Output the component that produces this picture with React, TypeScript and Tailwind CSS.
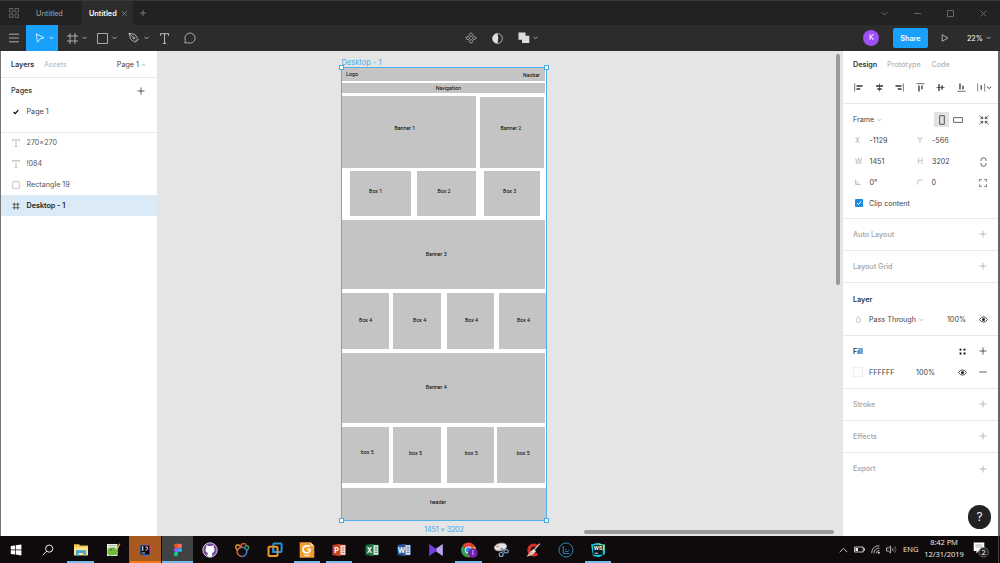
import type { ReactNode } from "react";

/* ---------- shared pieces ---------- */

type SvgProps = { w: number; h: number; className?: string; sw?: number; children: ReactNode };

const Svg = ({ w, h, className = "", sw = 0.8, children }: SvgProps) => (
  <svg
    width={w}
    height={h}
    viewBox={`0 0 ${w} ${h}`}
    fill="none"
    stroke="currentColor"
    strokeWidth={sw}
    className={`shrink-0 ${className}`}
  >
    {children}
  </svg>
);

const Chevron = ({ className = "" }: { className?: string }) => (
  <Svg w={5} h={4} className={className}>
    <path d="M.5 .8 2.5 2.8 4.5 .8" />
  </Svg>
);

const Plus = ({ className = "" }: { className?: string }) => (
  <Svg w={8} h={8} className={className}>
    <path d="M4 .5V7.5M.5 4H7.5" />
  </Svg>
);

/* ---------- title bar and toolbar ---------- */

const TitleBar = () => (
  <div className="flex h-[25px] items-center border-t border-[#383838] bg-[#222222] text-[7.3px] text-[#a5a5a5]">
    <Svg w={10} h={10} className="ml-[9px] text-[#777]">
      <path d="M.5 .5h3.4v3.4H.5zM6 .5h3.4v3.4H6zM.5 6h3.4v3.4H.5zM6 6h3.4v3.4H6z" />
    </Svg>
    <div className="ml-[17px] w-[46px] pt-px">Untitled</div>
    <div className="flex h-full w-[51px] items-center justify-between bg-[#2c2c2c] pt-px pr-[6px] pl-[7px] font-semibold text-white">
      Untitled
      <Svg w={5} h={5} className="text-[#999]" sw={0.7}>
        <path d="M.3 .3 4.7 4.7M4.7 .3 .3 4.7" />
      </Svg>
    </div>
    <Svg w={6} h={6} className="ml-[7px] text-[#888]">
      <path d="M3 0V6M0 3H6" />
    </Svg>
    <div className="ml-auto flex items-center pr-[13px] text-[#777]">
      <Svg w={7} h={5} className="mr-[26px]">
        <path d="M.5 1 3.5 4 6.5 1" />
      </Svg>
      <Svg w={7} h={7} className="mr-[26px]">
        <path d="M0 3.5H7" />
      </Svg>
      <Svg w={7} h={7} className="mr-[26px]">
        <path d="M.5 .5h6v6h-6z" />
      </Svg>
      <Svg w={7} h={7}>
        <path d="M.5 .5 6.5 6.5M6.5 .5 .5 6.5" />
      </Svg>
    </div>
  </div>
);

const Toolbar = () => (
  <div className="flex h-[26px] items-center bg-[#2c2c2c] text-[#c9c9c9]">
    <div className="flex w-[26px] pl-[8.5px]">
      <Svg w={10} h={10}>
        <path d="M0 1.2H10M0 5H10M0 8.8H10" />
      </Svg>
    </div>
    <div className="flex h-full w-[32px] items-center bg-[#18a0fb] pl-[9px] text-white">
      <Svg w={10} h={10}>
        <path d="M1.3 .8 9 4.8 5.2 5.8 2.5 9.2z" strokeLinejoin="round" />
      </Svg>
      <Chevron className="ml-[4px]" />
    </div>
    <div className="flex w-[35px] items-center pl-[9px]">
      <Svg w={11} h={11}>
        <path d="M3 0V11M8 0V11M0 3H11M0 8H11" />
      </Svg>
      <Chevron className="ml-[4px]" />
    </div>
    <div className="flex w-[34px] items-center pl-[4px]">
      <Svg w={11} h={11}>
        <path d="M.5 .5h10v10H.5z" />
      </Svg>
      <Chevron className="ml-[4px]" />
    </div>
    <div className="flex w-[32px] items-center pl-[1px]">
      <Svg w={12} h={12}>
        <path d="M1 1.2 7 2.5 9.8 6.6 6.6 10 2.5 7zM1 1.2 5.2 5.4M10.4 7.3 7.3 10.5" strokeLinejoin="round" />
        <circle cx="5.9" cy="6" r="1" />
      </Svg>
      <Chevron className="ml-[4px]" />
    </div>
    <div className="flex w-[26px] pl-[1px]">
      <Svg w={9} h={11} sw={0.9}>
        <path d="M.5 2.8V.7h8v2.1M4.5 .7v9.6M2.8 10.4h3.4" />
      </Svg>
    </div>
    <Svg w={12} h={12} className="-ml-px">
      <path d="M.7 10.8 1.4 8.3A5.1 5.1 0 1 1 4 10.8z" strokeLinejoin="round" />
    </Svg>
    <div className="ml-[269px] flex items-center">
      <Svg w={12} h={12}>
        <path d="M6 .7 8 2.7 6 4.7 4 2.7zM6 7.3 8 9.3 6 11.3 4 9.3zM2.7 4 4.7 6 2.7 8 .7 6zM9.3 4 11.3 6 9.3 8 7.3 6z" />
      </Svg>
      <Svg w={11} h={11} className="ml-[15px]">
        <circle cx="5.5" cy="5.5" r="4.9" />
        <path d="M5.5 .6A4.9 4.9 0 0 0 5.5 10.4Q7.2 5.5 5.5 .6z" fill="#ddd" stroke="none" />
      </Svg>
      <Svg w={12} h={12} className="ml-[15px]">
        <path d="M.5 .5h7v3.2h3.8v7.3H4V7.7H.5z" fill="#dedede" stroke="none" />
      </Svg>
      <Chevron className="ml-[3px]" />
    </div>
    <div className="ml-auto flex items-center pr-[9px]">
      <div className="flex size-[16px] items-center justify-center rounded-full bg-[#9b51f5] text-[7.5px] text-white">K</div>
      <div className="ml-[13.5px] flex h-[20px] w-[35px] items-center justify-center rounded-[2px] bg-[#18a0fb] pt-px text-[7.2px] font-semibold text-white">
        Share
      </div>
      <Svg w={8} h={8} className="ml-[13.5px]">
        <path d="M1.2 .8 7 4 1.2 7.2z" />
      </Svg>
      <div className="ml-[17.5px] pt-px text-[7.3px] text-white">22%</div>
      <Chevron className="ml-[3px]" />
    </div>
  </div>
);

/* ---------- left panel ---------- */

const TextGlyph = () => (
  <Svg w={8} h={8} className="text-[#aaa]" sw={0.7}>
    <path d="M.5 2.2V.7h7v1.5M4 .7v6.6M2.8 7.4h2.4" />
  </Svg>
);

const LayerRow = ({ icon, label }: { icon: ReactNode; label: string }) => (
  <div className="flex h-[21px] items-center pl-[11px]">
    {icon}
    <span className="ml-[6.5px]">{label}</span>
  </div>
);

const LeftPanel = () => (
  <aside className="w-[157px] shrink-0 border-l border-[#777] bg-white text-[7.2px] text-[#444]">
    <div className="flex h-[27px] items-center border-b border-[#e8e8e8] pt-px pl-[10px]">
      <span className="w-[33px] font-semibold text-[#333]">Layers</span>
      <span className="text-[#b3b3b3]">Assets</span>
      <span className="ml-auto">Page 1</span>
      <Chevron className="mr-[11px] ml-[2px] rotate-180 text-[#aaa]" />
    </div>
    <div className="h-[55px] border-b border-[#e8e8e8] pt-[2px]">
      <div className="flex h-[21px] items-center justify-between pr-[12px] pl-[10px]">
        <span className="pt-px font-medium text-[#333]">Pages</span>
        <Plus className="text-[#333]" />
      </div>
      <div className="flex h-[21px] items-center pl-[12px]">
        <Svg w={6} h={6} sw={1.2} className="text-black">
          <path d="M.7 3 2.2 4.6 5.3 1.2" />
        </Svg>
        <span className="ml-[7.5px]">Page 1</span>
      </div>
    </div>
    <div className="-mt-[0.6px] text-[#555]">
      <LayerRow icon={<TextGlyph />} label="270×270" />
      <LayerRow icon={<TextGlyph />} label="!084" />
      <LayerRow
        icon={
          <Svg w={8} h={8} className="text-[#aaa]" sw={0.7}>
            <path d="M.7 .7h6.6v6.6H.7z" />
          </Svg>
        }
        label="Rectangle 19"
      />
    </div>
    <div className="bg-[#daebf7] font-semibold text-[#222]">
      <LayerRow
        icon={
          <Svg w={8} h={8} className="text-[#444]" sw={0.8}>
            <path d="M2.3 .5V7.5M5.7 .5V7.5M.5 2.3H7.5M.5 5.7H7.5" />
          </Svg>
        }
        label="Desktop - 1"
      />
    </div>
  </aside>
);

/* ---------- canvas ---------- */

type Rect = [x: number, y: number, w: number, h: number];
type Label = [text: string, cx: number, cy: number];

const FRAME: Rect = [341, 67, 206, 454];

const BLOCKS: Rect[] = [
  [342, 68, 203, 13],
  [342, 83, 203, 10],
  [342, 96, 134.3, 72],
  [480, 96.6, 64, 71.4],
  [350, 170.7, 60.8, 45.5],
  [417, 170.7, 59.3, 45.5],
  [484, 170.7, 55.5, 45.5],
  [342, 220, 203, 68.7],
  [342, 293.3, 47, 55.6],
  [393.4, 293.3, 47.5, 55.6],
  [447, 293.3, 47.3, 55.6],
  [499, 293.3, 48, 55.6],
  [342, 353.2, 203, 69.4],
  [342, 427.2, 47, 55.6],
  [393.4, 427.2, 47.5, 55.6],
  [447, 427.2, 47.3, 55.6],
  [497.4, 427.2, 47.6, 55.6],
  [342, 488.2, 204.5, 32],
];

const LABELS: Label[] = [
  ["Logo", 352, 74],
  ["Navbar", 531.5, 75.3],
  ["Navigation", 448.3, 88.3],
  ["Banner 1", 404.9, 128],
  ["Banner 2", 510.9, 128],
  ["Box 1", 375.7, 190.4],
  ["Box 2", 444, 190.4],
  ["Box 3", 509.7, 190.4],
  ["Banner 3", 436.2, 254.3],
  ["Box 4", 365.7, 320.3],
  ["Box 4", 419.7, 320.3],
  ["Box 4", 471.5, 319.5],
  ["Box 4", 523.5, 320.3],
  ["Banner 4", 436.2, 386.4],
  ["box 5", 367.3, 451.8],
  ["box 5", 415.5, 452.6],
  ["box 5", 471.3, 453.3],
  ["box 5", 523.3, 452.6],
  ["header", 438, 502.3],
];

const HANDLES: [number, number][] = [
  [341, 67],
  [546, 67],
  [341, 520],
  [546, 520],
];

const ORIGIN_X = 157;
const ORIGIN_Y = 51;

const box = ([x, y, w, h]: Rect) => ({ left: x - ORIGIN_X, top: y - ORIGIN_Y, width: w, height: h });
const point = (x: number, y: number) => ({ left: x - ORIGIN_X, top: y - ORIGIN_Y });

const Canvas = () => (
  <main className="relative min-w-0 flex-1 overflow-hidden bg-[#e5e5e5]">
    <div className="absolute bg-white" style={box(FRAME)} />
    {BLOCKS.map((b, i) => (
      <div key={i} className="absolute bg-[#c4c4c4]" style={box(b)} />
    ))}
    {LABELS.map(([text, cx, cy], i) => (
      <div
        key={i}
        className="absolute -translate-x-1/2 -translate-y-1/2 pt-[1.2px] font-[Roboto,sans-serif] text-[5.3px] leading-none whitespace-nowrap text-black"
        style={point(cx, cy)}
      >
        {text}
      </div>
    ))}
    <div className="absolute border border-[#4fb0ec]" style={box(FRAME)} />
    <div className="absolute text-[7.5px] leading-none whitespace-nowrap text-[#45a9e8]" style={point(341.5, 59)}>
      Desktop - 1
    </div>
    {HANDLES.map(([x, y]) => (
      <div
        key={`${x}-${y}`}
        className="absolute -mt-[2px] -ml-[2px] size-[5px] border border-[#45a9e8] bg-white"
        style={point(x, y)}
      />
    ))}
    <div
      className="absolute -translate-x-1/2 -translate-y-1/2 pt-px text-[7.3px] leading-none tracking-[-0.25px] whitespace-nowrap text-[#45a9e8]"
      style={point(444, 529.2)}
    >
      1451 × 3202
    </div>
    <div className="absolute rounded-full bg-[#999]" style={box([836, 54, 4, 231])} />
    <div className="absolute rounded-full bg-[#999]" style={box([584, 529.5, 250, 4])} />
  </main>
);

/* ---------- right panel ---------- */

const ALIGN_ICONS: { d: string; thin: string }[] = [
  { thin: "M.7 .5V8.5", d: "M2.5 3H8.5M2.5 6H6.2" },
  { thin: "M4.5 .5V8.5", d: "M1 3H8M2.3 6H6.7" },
  { thin: "M8.3 .5V8.5", d: "M.5 3H6.5M2.8 6H6.5" },
  { thin: "M.5 .7H8.5", d: "M3 2.5V8.5M6 2.5V6.2" },
  { thin: "M.5 4.5H8.5", d: "M3 1V8M6 2.3V6.7" },
  { thin: "M.5 8.3H8.5", d: "M3 .5V6.5M6 2.8V6.5" },
];

const Field = ({ mark, value }: { mark: ReactNode; value: string }) => (
  <div className="flex w-[62.5px] items-center">
    <span className="flex w-[14.5px] text-[#b0b0b0]">{mark}</span>
    <span className="text-[#444]">{value}</span>
  </div>
);

const FieldRow = ({ a, b, end }: { a: ReactNode; b: ReactNode; end?: ReactNode }) => (
  <div className="flex h-[21px] items-center pr-[11px] pl-[12px]">
    {a}
    {b}
    <span className="ml-auto">{end}</span>
  </div>
);

const EmptySection = ({ label, last = false }: { label: string; last?: boolean }) => (
  <div
    className={
      last
        ? "flex h-[32px] items-center justify-between pr-[11px] pl-[10px] text-[#a3a3a3]"
        : "flex h-[31.9px] items-center justify-between border-b border-[#e9e9e9] pr-[11px] pl-[10px] text-[#a3a3a3]"
    }
  >
    <span className="pt-px font-medium">{label}</span>
    <Plus className="text-[#aaa]" />
  </div>
);

const Eye = ({ className = "" }: { className?: string }) => (
  <Svg w={9} h={7} className={`text-[#222] ${className}`}>
    <path d="M.4 3.5Q4.5 -1.8 8.6 3.5Q4.5 8.8 .4 3.5z" />
    <circle cx="4.5" cy="3.5" r="1.5" fill="currentColor" stroke="none" />
  </Svg>
);

const RightPanel = () => (
  <aside className="relative w-[157px] shrink-0 border-r-2 border-[#666] bg-white text-[7.2px] text-[#444]">
    <div className="flex h-[26px] items-center pt-px pl-[10px] font-medium text-[#b3b3b3]">
      <span className="w-[34px] font-semibold text-[#333]">Design</span>
      <span className="w-[44.5px]">Prototype</span>
      <span>Code</span>
    </div>
    <div className="flex h-[27px] items-center justify-between border-b border-[#e9e9e9] pr-[6px] pb-[5px] pl-[11px] text-[#333]">
      {ALIGN_ICONS.map(({ thin, d }) => (
        <Svg key={d} w={9} h={9}>
          <path d={thin} strokeWidth={0.7} />
          <path d={d} strokeWidth={1.3} />
        </Svg>
      ))}
      <Svg w={15} h={9}>
        <path d="M.7 .5V8.5M7.7 .5V8.5" strokeWidth={0.6} />
        <path d="M4.2 2.2V6.8" strokeWidth={1.2} />
        <path d="M10.2 3.7 12.2 5.6 14.2 3.7" strokeWidth={1} />
      </Svg>
    </div>

    <div className="h-[115px] border-b border-[#e9e9e9] pt-[5px]">
      <div className="flex h-[21px] items-center pr-[9.5px] pl-[10px]">
        <span>Frame</span>
        <Chevron className="ml-[3px] text-[#aaa]" />
        <div className="ml-auto flex h-[15px] w-[15px] items-center justify-center bg-[#e3e3e3] text-[#333]">
          <Svg w={6} h={10}>
            <path d="M.7 .7h4.6v8.6H.7z" />
          </Svg>
        </div>
        <Svg w={10} h={6} className="ml-[3.5px] text-[#444]">
          <path d="M.6 .6h8.8v4.8H.6z" />
        </Svg>
        <Svg w={10} h={10} className="ml-[16px] text-[#333]">
          <path d="M.7 .7 3.6 3.6M3.6 1.4V3.6H1.4M9.3 .7 6.4 3.6M6.4 1.4V3.6H8.6M.7 9.3 3.6 6.4M3.6 8.6V6.4H1.4M9.3 9.3 6.4 6.4M6.4 8.6V6.4H8.6" />
        </Svg>
      </div>
      <FieldRow a={<Field mark="X" value="-1129" />} b={<Field mark="Y" value="-566" />} />
      <FieldRow
        a={<Field mark="W" value="1451" />}
        b={<Field mark="H" value="3202" />}
        end={
          <Svg w={7} h={10} className="text-[#444]">
            <path d="M1 4V3Q1 .7 3.5 .7T6 3V4M1 6V7Q1 9.3 3.5 9.3T6 7V6" />
          </Svg>
        }
      />
      <FieldRow
        a={
          <Field
            mark={
              <Svg w={6} h={6}>
                <path d="M.6 .5V5.4H5.6M.6 2.6Q3 2.8 3.2 5.4" />
              </Svg>
            }
            value="0°"
          />
        }
        b={
          <Field
            mark={
              <Svg w={6} h={6}>
                <path d="M.6 5.6V3.4Q.6 .8 3.2 .8H5.6" />
              </Svg>
            }
            value="0"
          />
        }
        end={
          <Svg w={8} h={8} className="text-[#444]">
            <path d="M.6 2.6V.6H2.6M5.4 .6H7.4V2.6M7.4 5.4V7.4H5.4M2.6 7.4H.6V5.4" />
          </Svg>
        }
      />
      <div className="flex h-[20.5px] items-center pl-[11.5px]">
        <span className="flex size-[8px] items-center justify-center rounded-[1px] bg-[#188de0] text-white">
          <Svg w={6} h={6} sw={1}>
            <path d="M1 3 2.5 4.5 5.2 1.5" />
          </Svg>
        </span>
        <span className="ml-[6.5px]">Clip content</span>
      </div>
    </div>

    <EmptySection label="Auto Layout" />
    <EmptySection label="Layout Grid" />

    <div className="h-[53px] border-b border-[#e9e9e9] pt-[5.5px]">
      <div className="flex h-[21px] items-center pt-px pl-[10px] font-semibold text-[#333]">Layer</div>
      <div className="flex h-[21px] items-center pr-[10px] pl-[13px]">
        <Svg w={5} h={7} className="text-[#aaa]" sw={0.7}>
          <path d="M2.5 .6Q4.6 3 4.6 4.3A2.1 2.1 0 0 1 .4 4.3Q.4 3 2.5 .6z" />
        </Svg>
        <span className="ml-[8px]">Pass Through</span>
        <Chevron className="ml-[3px] text-[#aaa]" />
        <span className="ml-auto">100%</span>
        <Eye className="ml-[13px]" />
      </div>
    </div>

    <div className="h-[53px] border-b border-[#e9e9e9] pt-[5px]">
      <div className="flex h-[21px] items-center pr-[11px] pl-[10px] font-semibold text-[#333]">
        <span>Fill</span>
        <Svg w={7} h={7} className="mr-[13px] ml-auto text-black">
          <path
            d="M.6 .8h1.8v1.8H.6zM4.6 .8h1.8v1.8H4.6zM.6 4.6h1.8v1.8H.6zM4.6 4.6h1.8v1.8H4.6z"
            fill="currentColor"
            stroke="none"
          />
        </Svg>
        <Plus className="text-[#333]" />
      </div>
      <div className="flex h-[21px] items-center pr-[11px] pl-[10px]">
        <span className="size-[10px] border border-[#eee] bg-white" />
        <span className="ml-[6px] w-[47px]">FFFFFF</span>
        <span>100%</span>
        <Eye className="mr-[12px] ml-auto" />
        <Svg w={8} h={8} className="text-[#333]">
          <path d="M.3 4H7.7" />
        </Svg>
      </div>
    </div>

    <EmptySection label="Stroke" />
    <EmptySection label="Effects" />
    <EmptySection label="Export" last />

    <div className="absolute right-[6.7px] bottom-[7.5px] flex size-[23.5px] items-center justify-center rounded-full bg-[#222] text-[12px] text-[#eee]">
      ?
    </div>
  </aside>
);

/* ---------- taskbar ---------- */

const Square = ({ letter, fill }: { letter: string; fill: string }) => (
  <Svg w={16} h={16}>
    <path d="M7 3h7.5v10H7z" fill="#f4f4f4" stroke={fill} strokeWidth=".6" />
    <path d="M10.5 5.2h3M10.5 7h3M10.5 8.8h3M10.5 10.6h3" stroke={fill} strokeWidth=".8" />
    <path d="M1.5 3 9.5 1.7v12.6L1.5 13z" fill={fill} stroke="none" />
    <text x="5.5" y="10.7" fontSize="7.2" fontWeight="700" textAnchor="middle" fill="#fff" stroke="none">
      {letter}
    </text>
  </Svg>
);

const APPS: { name: string; tone?: "orange" | "gray"; open?: boolean; icon: ReactNode }[] = [
  {
    name: "start",
    icon: (
      <Svg w={12} h={12}>
        <path
          d="M.8 2 5 1.4v4.2H.8zM5.7 1.3 11.4 .5v5.1H5.7zM.8 6.3H5v4.2L.8 9.9zM5.7 6.3h5.7v5.1L5.7 10.6z"
          fill="#fff"
          stroke="none"
        />
      </Svg>
    ),
  },
  {
    name: "search",
    icon: (
      <Svg w={12} h={12} className="text-white" sw={0.9}>
        <circle cx="7.2" cy="4.6" r="3.6" />
        <path d="M4.6 7.2 .8 11.2" />
      </Svg>
    ),
  },
  {
    name: "explorer",
    open: true,
    icon: (
      <Svg w={16} h={14}>
        <g stroke="none">
          <path d="M1 1.2h5l1.2 1.3H15V11H1z" fill="#f0c64f" />
          <path d="M1 4h14v8.4H1z" fill="#ffe28a" />
          <path d="M3 7.2h10v5.6h-2.6V10H5.6v2.8H3z" fill="#40a5d8" />
        </g>
      </Svg>
    ),
  },
  {
    name: "notes",
    icon: (
      <Svg w={16} h={16}>
        <path d="M2 2h10.5v12H2z" fill="#e9efe3" stroke="none" />
        <path d="M2.5 9Q2.5 5 6.5 5.6Q10.5 4 11.5 8Q14.5 10 12 12.8L4.5 13.5Q1.5 11.5 2.5 9z" fill="#73b83d" stroke="none" />
        <path d="M3.5 3.5h7.5" stroke="#8fa5ad" />
        <path d="M14.8 1.8 11.6 8" stroke="#d7ad36" strokeWidth="1.4" />
        <circle cx="6" cy="7.7" r=".8" fill="#294e18" stroke="none" />
      </Svg>
    ),
  },
  {
    name: "idea",
    tone: "orange",
    icon: (
      <Svg w={14} h={14}>
        <path d="M1 3 7 1l6 3-1 8-6 1.2L1 10z" fill="#3676d9" stroke="none" />
        <path d="M8 .8 13.3 4 12.5 9 8 8z" fill="#e54575" stroke="none" />
        <path d="M2.5 2.5h9v9h-9z" fill="#0b0b12" stroke="none" />
        <path d="M3.5 4h2.2M4.6 4v3M3.5 7h2.2M7.4 4h2V6.5Q8.8 7.4 7.4 6.9M3.5 10h3.6" stroke="#fff" />
      </Svg>
    ),
  },
  {
    name: "figma",
    tone: "gray",
    open: true,
    icon: (
      <Svg w={10} h={14}>
        <g stroke="none">
          <path d="M5 .7H3a2.1 2.1 0 0 0 0 4.2h2z" fill="#f24e1e" />
          <path d="M5 .7h2a2.1 2.1 0 0 1 0 4.2H5z" fill="#ff7262" />
          <path d="M5 4.9H3a2.1 2.1 0 0 0 0 4.2h2z" fill="#a259ff" />
          <circle cx="7.1" cy="7" r="2.1" fill="#1abcfe" />
          <path d="M5 9.1H3a2.1 2.1 0 1 0 2 2.1z" fill="#0acf83" />
        </g>
      </Svg>
    ),
  },
  {
    name: "github",
    icon: (
      <Svg w={16} h={16}>
        <circle cx="8" cy="8" r="7.2" fill="#74479c" stroke="#e6dcee" strokeWidth=".9" />
        <path
          d="M6 14.6V12.5Q4.6 12.6 3.8 11.2M6 11Q3.3 10.3 3.6 7.4Q3.6 6.2 4.3 5.4Q4 4.3 4.5 3.3Q5.6 3.4 6.4 4.1Q8 3.7 9.6 4.1Q10.4 3.4 11.5 3.3Q12 4.3 11.7 5.4Q12.4 6.2 12.4 7.4Q12.7 10.3 10 11Q10.3 11.6 10.2 14.6Q8 15.3 6 14.6z"
          fill="#fff"
          stroke="none"
        />
      </Svg>
    ),
  },
  {
    name: "navicat",
    icon: (
      <Svg w={16} h={16} sw={1.4}>
        <path d="M3.2 8Q.5 4.5 2.8 3Q5.5 2.6 7.5 5" stroke="#e9a52c" />
        <path d="M6.2 4.5Q7.6 .9 10.8 1.6Q12.8 2.5 11.6 5" stroke="#dd4a35" />
        <path d="M10.6 4.6Q13.5 2.8 14.7 4.8Q14.8 7.2 12.8 8.6" stroke="#3f9b46" />
        <path d="M7.9 14.5A5 5 0 0 1 3.2 8.6Q4.8 5.1 7.9 5.2" stroke="#e2693c" />
        <path d="M7.9 14.5A5 5 0 0 0 12.6 8.2Q11 5 7.9 5.2" stroke="#3d7fc0" />
      </Svg>
    ),
  },
  {
    name: "vmware",
    icon: (
      <Svg w={16} h={16} sw={2}>
        <rect x="6.3" y="1.5" width="8.3" height="8.5" rx="1" stroke="#2b91d2" />
        <rect x="1.5" y="4.8" width="9" height="9.2" rx="1" stroke="#f0981d" />
        <path d="M6.3 5.8V10h4" stroke="#2b91d2" />
      </Svg>
    ),
  },
  {
    name: "foxit",
    open: true,
    icon: (
      <Svg w={16} h={16}>
        <path d="M.7 .3h10.8l3.8 3.8v11.6H.7z" fill="#f39a30" stroke="none" />
        <path d="M11.5 .3v3.8h3.8z" fill="#ffd7a0" stroke="none" />
        <path d="M11 4.2Q4 3 4 7.5Q4.3 11 8 10.8Q11.5 10.5 11 7.3H8" stroke="#fff" strokeWidth="1.8" />
        <path d="M5 13.5h6" stroke="#fff0dc" strokeWidth="1.2" />
      </Svg>
    ),
  },
  { name: "powerpoint", open: true, icon: <Square letter="P" fill="#cf4426" /> },
  { name: "excel", icon: <Square letter="X" fill="#1f7244" /> },
  { name: "word", icon: <Square letter="W" fill="#2a569a" /> },
  {
    name: "kmplayer",
    icon: (
      <Svg w={16} h={14}>
        <path d="M14.8 1 5.8 7 14.8 13z" fill="#b8a3f0" stroke="none" />
        <path d="M1.2 1 9.5 7 1.2 13z" fill="#7440de" stroke="none" />
      </Svg>
    ),
  },
  {
    name: "chrome",
    open: true,
    icon: (
      <Svg w={18} h={16}>
        <g stroke="none">
          <path d="M8.5 8 2.1 4.3A7.2 7.2 0 0 1 14.9 4.3z" fill="#df4333" />
          <path d="M8.5 8V15.2A7.2 7.2 0 0 1 2.1 4.3z" fill="#31a350" />
          <path d="M8.5 8 14.9 4.3A7.2 7.2 0 0 1 8.5 15.2z" fill="#f6c735" />
          <circle cx="8.5" cy="8" r="3.6" fill="#fff" />
          <circle cx="8.5" cy="8" r="2.8" fill="#438cf0" />
          <circle cx="12.8" cy="11" r="4.8" fill="#7420a8" />
          <text x="12.8" y="13.2" fontSize="6" textAnchor="middle" fill="#fff">
            I
          </text>
        </g>
      </Svg>
    ),
  },
  {
    name: "snip",
    icon: (
      <Svg w={16} h={16}>
        <ellipse cx="7.5" cy="5" rx="6.3" ry="3.7" fill="#e4e5e8" stroke="#a4a9b0" transform="rotate(-12 7.5 5)" />
        <path d="M7 6.5 12.5 8.2M9 5.5 8.5 11" stroke="#777" />
        <path d="M3 4.8 6.5 4.2" stroke="#cf5f57" />
        <circle cx="8.2" cy="12.5" r="2" stroke="#7ea9cf" strokeWidth="1.1" />
        <ellipse cx="13" cy="9.3" rx="2.2" ry="1.7" stroke="#7ea9cf" strokeWidth="1.1" />
      </Svg>
    ),
  },
  {
    name: "ccleaner",
    icon: (
      <Svg w={16} h={16}>
        <path d="M12.4 4.6A4.9 4.9 0 1 0 12.2 11.6" stroke="#d92e24" strokeWidth="3.4" />
        <path d="M14.8 1.6 9.5 7.5" stroke="#b9bec5" strokeWidth="1.3" />
        <path d="M8.8 6.8 11 9.3 7.5 13 1.5 14.5 5 10z" fill="#e6d9d0" stroke="none" />
        <path d="M2.5 13.5 7 10M4.5 14 8.5 11" stroke="#c15a3b" strokeWidth=".6" />
      </Svg>
    ),
  },
  {
    name: "stats",
    icon: (
      <Svg w={16} h={16} className="text-[#2a87bd]" sw={1}>
        <circle cx="8" cy="8" r="7" />
        <path d="M5.2 4v7.4h6.3M7.2 9.5h2.2M7.2 7.5h1.2M9.5 9.5 11.3 8.3" />
      </Svg>
    ),
  },
  {
    name: "webstorm",
    open: true,
    icon: (
      <Svg w={16} h={16}>
        <path d="M1 2.5 8 .8 11 3 14.8 2 15 12 9 15.2 3 14z" fill="#20c3d8" stroke="none" />
        <path d="M9 1 14.8 3.5 14 9 10 9z" fill="#a9e08a" stroke="none" />
        <path d="M3.2 3.2h9.6v9.6H3.2z" fill="#07191c" stroke="none" />
        <text x="8" y="8.3" fontSize="5" fontWeight="700" textAnchor="middle" fill="#fff" stroke="none">
          WS
        </text>
        <path d="M4.5 11.2H8" stroke="#fff" />
      </Svg>
    ),
  },
];

const Taskbar = () => (
  <footer className="flex h-[27px] shrink-0 items-center bg-[#0f0b0c] text-[#eee]">
    <div className="-ml-[0.7px] flex h-full">
      {APPS.map(({ name, tone, open, icon }) => (
        <div
          key={name}
          className={`relative flex h-full w-[32.33px] items-center justify-center border-l ${
            tone === "orange"
              ? "border-[#a85a1e] bg-[#a85a1e]"
              : tone === "gray"
                ? "border-[#0f0b0c] bg-[#414244]"
                : "border-transparent"
          }`}
        >
          {icon}
          {open && (
            <span
              className={`absolute bottom-0 h-[1.7px] bg-[#76b9ed] ${tone === "gray" ? "inset-x-0" : "inset-x-[2.5px]"}`}
            />
          )}
          {tone === "orange" && <span className="absolute inset-x-0 bottom-0 h-[1.7px] bg-[#f37a16]" />}
        </div>
      ))}
    </div>
    <div className="ml-auto flex h-full items-center font-['Open_Sans',sans-serif] text-[7.6px]">
      <Svg w={9} h={6}>
        <path d="M.7 5.2 4.5 1.4 8.3 5.2" />
      </Svg>
      <Svg w={11} h={7} className="ml-[6px]">
        <path d="M.5 1h8.7v5H.5zM9.5 2.5h1v2h-1" />
        <path d="M1.5 2h2.5v3H1.5z" fill="currentColor" stroke="none" />
      </Svg>
      <Svg w={9} h={9} className="ml-[6px]" sw={0.7}>
        <path d="M.7 8.3Q.7 .8 8.5 .7M3 8.3Q3 3.2 8.5 3M5.3 8.3Q5.4 5.5 8.5 5.3" />
        <circle cx="7.8" cy="7.7" r=".7" fill="currentColor" />
      </Svg>
      <Svg w={11} h={9} className="ml-[6px]" sw={0.7}>
        <path d="M.5 3h1.8L4.5 1v7L2.3 6H.5zM6 3.3Q7 4.5 6 5.7" />
        <path d="M7.5 2.2Q9 4.5 7.5 6.8M9 1.2Q11 4.5 9 7.8" opacity=".45" />
      </Svg>
      <span className="ml-[6px] w-[21px] pt-px">ENG</span>
      <div className="w-[40px] pb-px text-center leading-[11.7px] tracking-[-0.1px] whitespace-nowrap">
        <div>8:42 PM</div>
        <div>12/31/2019</div>
      </div>
      <Svg w={16} h={17} className="ml-[9px]">
        <path d="M.7 1.5h10.6v8.6H5.7L3.5 12.4V10.1H.7z" fill="#fff" stroke="none" />
        <path d="M2.5 4h7M2.5 6h7" stroke="#777" strokeWidth=".6" />
        <circle cx="10.6" cy="11.3" r="4.7" fill="#222" stroke="#888" strokeWidth=".7" />
        <text x="10.6" y="14" fontSize="7.5" textAnchor="middle" fill="#fff" stroke="none">
          2
        </text>
      </Svg>
      <span className="ml-[8.5px] h-full w-px bg-[#444]" />
      <span className="w-[1.5px]" />
    </div>
  </footer>
);

export default function App() {
  return (
    <div className="flex h-[563px] w-[1000px] flex-col overflow-hidden font-[Inter,sans-serif] leading-none">
      <TitleBar />
      <Toolbar />
      <div className="flex min-h-0 flex-1">
        <LeftPanel />
        <Canvas />
        <RightPanel />
      </div>
      <Taskbar />
    </div>
  );
}
